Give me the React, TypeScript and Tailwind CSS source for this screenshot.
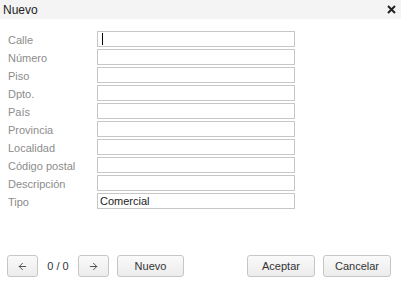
import { ArrowLeft, ArrowRight } from 'lucide-react';

const fields = [
  'Calle',
  'Número',
  'Piso',
  'Dpto.',
  'País',
  'Provincia',
  'Localidad',
  'Código postal',
  'Descripción',
  'Tipo',
];

const btn =
  'h-[22px] rounded-[3px] border border-[#c6c6c6] bg-gradient-to-b from-[#fafafa] to-[#ececec] text-[11px] text-[#333] flex items-center justify-center';

export default function App() {
  return (
    <div
      className="h-screen w-full bg-white flex flex-col"
      style={{ fontFamily: '"Liberation Sans", Arial, sans-serif' }}
    >
      <div className="h-[19px] bg-[#f4f4f4] flex items-center justify-between pl-[3px] pr-[5px]">
        <span className="text-[12px] text-[#222]">Nuevo</span>
        <svg width="9" height="9" viewBox="0 0 9 9">
          <path d="M1 1 L8 8 M8 1 L1 8" stroke="#222" strokeWidth="2" />
        </svg>
      </div>

      <div className="flex flex-col gap-[2px] pt-[12px]">
        {fields.map((f, i) => (
          <div key={f} className="flex items-center h-[16px]">
            <label className="w-[97px] pl-[8px] pt-[2px] text-[11px] text-[#8c8c8c]">{f}</label>
            <div className="w-[198px] h-[16px] border border-[#c6c6c6] bg-white flex items-center px-[2px] text-[11px] text-[#222]">
              {i === 0 && <span className="w-px h-[12px] bg-black ml-[2px]" />}
              {f === 'Tipo' && 'Comercial'}
            </div>
          </div>
        ))}
      </div>

      <div className="mt-auto pb-[10px] px-[7px] flex items-center">
        <button className={`${btn} w-[31px]`}>
          <ArrowLeft size={11} strokeWidth={2} color="#444" />
        </button>
        <span className="text-[11px] text-[#333] w-[40px] text-center">0 / 0</span>
        <button className={`${btn} w-[31px]`}>
          <ArrowRight size={11} strokeWidth={2} color="#444" />
        </button>
        <button className={`${btn} w-[67px] ml-[8px]`}>Nuevo</button>
        <div className="flex-1" />
        <button className={`${btn} w-[68px]`}>Aceptar</button>
        <button className={`${btn} w-[68px] ml-[8px] mr-[3px]`}>Cancelar</button>
      </div>
    </div>
  );
}
